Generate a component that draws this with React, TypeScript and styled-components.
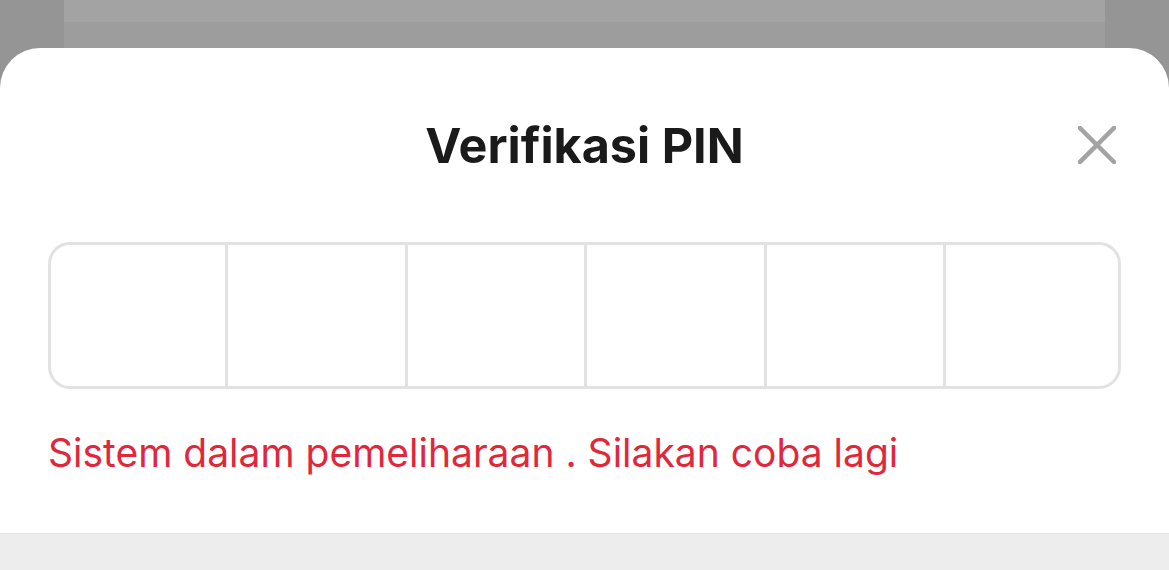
import React from 'react';
import styled, { createGlobalStyle } from 'styled-components';

const GlobalStyle = createGlobalStyle`
  html, body {
    margin: 0;
    padding: 0;
  }
  body {
    font-family: Inter, "Liberation Sans", sans-serif;
    background: #959595;
  }
`;

const Page = styled.div`
  width: 100%;
  height: 570px;
  display: flex;
  flex-direction: column;
  background: #959595;
  overflow: hidden;
`;

const Backdrop = styled.div`
  height: 48px;
  display: flex;
  padding: 0 64px;
`;

const BehindCard = styled.div`
  flex: 1;
  display: flex;
  flex-direction: column;
  background: #9d9d9d;
`;

const BehindBand = styled.div`
  height: 22px;
  background: #a3a3a3;
`;

const Sheet = styled.div`
  height: 485px;
  background: #ffffff;
  border-radius: 40px 40px 0 0;
  padding: 0 48px;
  display: flex;
  flex-direction: column;
`;

const Header = styled.div`
  display: grid;
  grid-template-columns: 1fr auto 1fr;
  align-items: center;
  height: 74px;
  margin-top: 60px;
`;

const Title = styled.h1`
  grid-column: 2;
  margin: 0;
  font-size: 48.5px;
  font-weight: 700;
  color: #1a1a1a;
`;

const CloseButton = styled.button`
  grid-column: 3;
  justify-self: end;
  width: 44px;
  height: 44px;
  margin-right: 2px;
  padding: 0;
  border: none;
  background: none;
  display: flex;
  align-items: center;
  justify-content: center;
  cursor: pointer;
`;

const PinBox = styled.div`
  margin-top: 60px;
  height: 141px;
  border: 3px solid #e2e2e2;
  border-radius: 22px;
  display: grid;
  grid-template-columns: 177px repeat(4, 179.5px) 1fr;
  overflow: hidden;
`;

const PinCell = styled.div<{ $last?: boolean }>`
  border-right: ${({ $last }) => ($last ? 'none' : '3px solid #e2e2e2')};
`;

const ErrorText = styled.p`
  margin: 36px 0 0;
  font-size: 39px;
  line-height: 56px;
  color: #e0283c;
  font-weight: 400;
`;

const Footer = styled.div`
  flex: 1;
  background: #ededed;
  border-top: 1px solid #e4e4e4;
`;

export default function App() {
  const cells = [0, 1, 2, 3, 4, 5];
  return (
    <>
      <GlobalStyle />
      <Page>
        <Backdrop>
          <BehindCard>
            <BehindBand />
          </BehindCard>
        </Backdrop>
        <Sheet>
          <Header>
            <Title>Verifikasi PIN</Title>
            <CloseButton aria-label="Tutup">
              <svg width="38" height="38" viewBox="0 0 38 38">
                <path d="M2 2 L36 36 M36 2 L2 36" stroke="#a3a3a3" strokeWidth="4.5" strokeLinecap="square" />
              </svg>
            </CloseButton>
          </Header>
          <PinBox>
            {cells.map((i) => (
              <PinCell key={i} $last={i === cells.length - 1} />
            ))}
          </PinBox>
          <ErrorText>Sistem dalam pemeliharaan . Silakan coba lagi</ErrorText>
        </Sheet>
        <Footer />
      </Page>
    </>
  );
}
